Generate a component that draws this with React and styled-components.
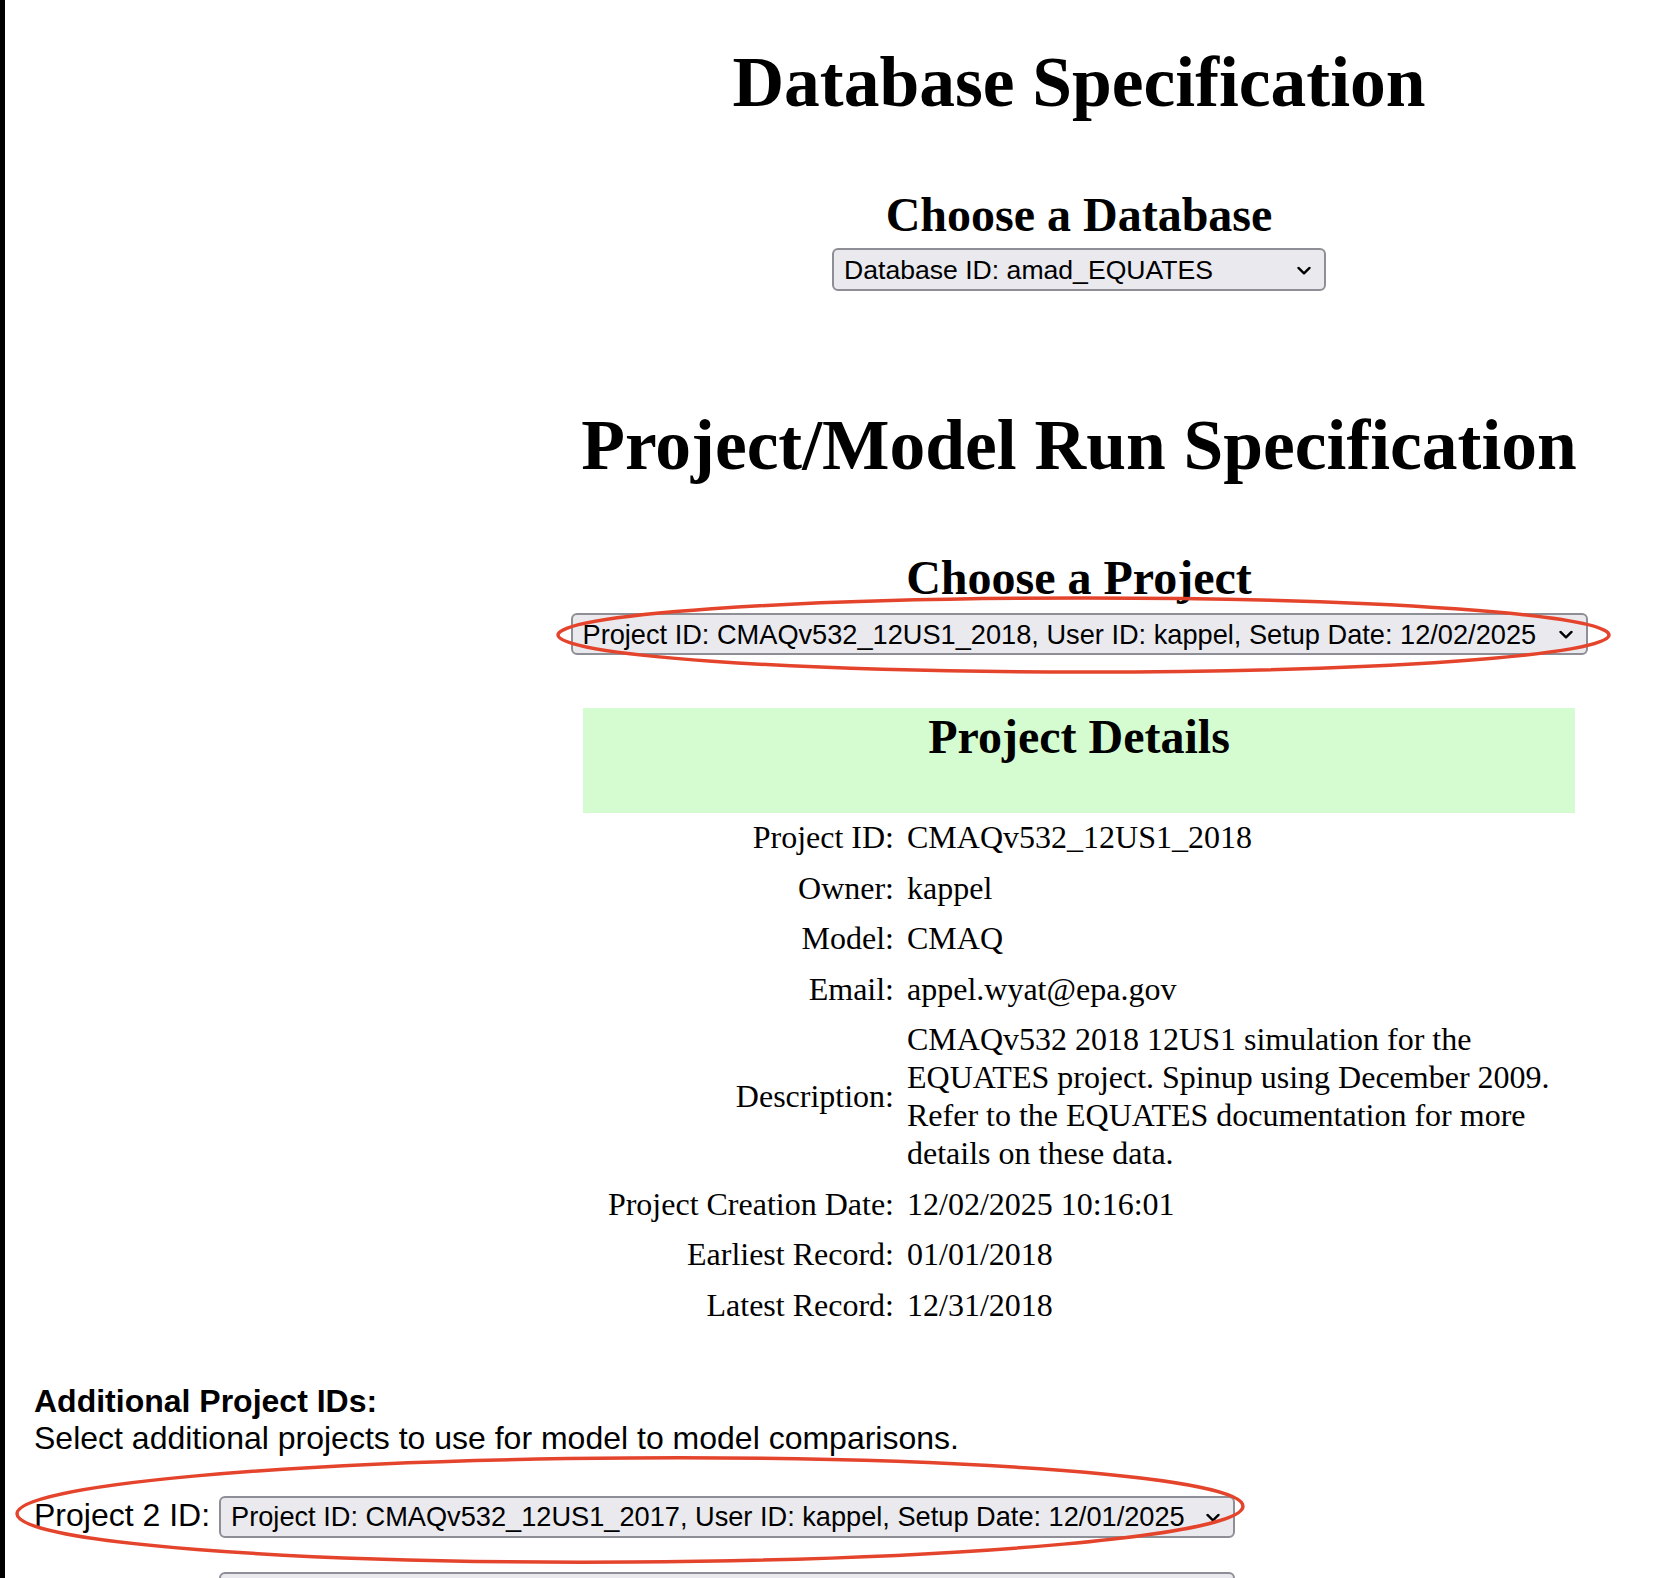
import styled, { createGlobalStyle } from "styled-components";

const GlobalStyle = createGlobalStyle`
    html, body {
        margin: 0;
        padding: 0;
        background: #fff;
        overflow: hidden;
    }
    body {
        font-family: "Liberation Serif", "Times New Roman", serif;
        color: #000;
    }
`;

const Page = styled.div`
    position: relative;
    height: 1578px;
    box-sizing: border-box;
    border-left: 5px solid #000;
    overflow: hidden;
`;

const Layout = styled.div`
    display: grid;
    grid-template-columns: 495px 1fr;
`;

const Sidebar = styled.aside``;

const Main = styled.main`
    display: flex;
    flex-direction: column;
    align-items: center;
    padding-top: 41px;
    text-align: center;
`;

const Title = styled.h1`
    margin: 0 0 64px;
    font-size: 71.5px;
    line-height: 82px;
    font-weight: bold;
`;

const Subtitle = styled.h2`
    margin: 0 0 ${({ $gap }) => $gap ?? 0}px;
    font-size: 48px;
    line-height: 55px;
    font-weight: bold;
`;

const SelectWrap = styled.div`
    position: relative;
    display: inline-block;
    margin-bottom: ${({ $gap }) => $gap ?? 0}px;
`;

const Select = styled.select`
    appearance: none;
    -webkit-appearance: none;
    display: block;
    width: ${({ $width }) => $width}px;
    height: ${({ $height }) => $height ?? 42}px;
    box-sizing: border-box;
    margin: 0;
    padding: 0 40px 0 10px;
    border: 2px solid #8e8e96;
    border-radius: 6px;
    background: #e9e9ee;
    color: #000;
    font-family: "Liberation Sans", Arial, sans-serif;
    font-size: ${({ $size }) => $size ?? 27.2}px;
    outline: none;
`;

const Chevron = styled.svg`
    position: absolute;
    right: 15px;
    top: 50%;
    transform: translateY(-40%);
    pointer-events: none;
`;

const Ring = styled.svg`
    position: absolute;
    left: ${({ $left }) => $left}px;
    top: ${({ $top }) => $top}px;
    overflow: visible;
    pointer-events: none;
    transform: rotate(${({ $tilt }) => $tilt ?? 0}deg);
`;

const DetailsBanner = styled.div`
    width: 992px;
    height: 105px;
    box-sizing: border-box;
    padding-top: 1px;
    background: #d5fcd0;
`;

const DetailsGrid = styled.dl`
    width: 992px;
    margin: 0;
    display: grid;
    grid-template-columns: 311px 1fr;
    column-gap: 13px;
    font-size: 32px;
    line-height: 38px;
    text-align: left;
`;

const Term = styled.dt`
    align-self: center;
    padding: 5px 0 7.5px;
    text-align: right;
`;

const Value = styled.dd`
    margin: 0;
    padding: 5px 0 7.5px;
`;

const Additional = styled.section`
    padding: 52px 0 0 29px;
    font-family: "Liberation Sans", Arial, sans-serif;
    font-size: 32px;
    line-height: 36.8px;
`;

const AdditionalTitle = styled.div`
    font-weight: bold;
`;

const ProjectRows = styled.div`
    display: flex;
    flex-direction: column;
    gap: 34px;
    margin-top: 39px;
`;

const ProjectRow = styled.div`
    position: relative;
    display: flex;
    align-items: baseline;
    gap: 9px;
`;

const RowLabel = styled.span`
    min-width: 176px;
`;

const ChevronIcon = () => (
    <Chevron width="14" height="9" viewBox="0 0 14 9">
        <polyline
            points="1.5,1.5 7,7 12.5,1.5"
            fill="none"
            stroke="#000"
            strokeWidth="2.3"
            strokeLinecap="round"
            strokeLinejoin="round"
        />
    </Chevron>
);

const Highlight = ({ left, top, width, height, tilt }) => (
    <Ring
        $left={left}
        $top={top}
        $tilt={tilt}
        width={width}
        height={height}
        viewBox={`0 0 ${width} ${height}`}
    >
        <ellipse
            cx={width / 2}
            cy={height / 2}
            rx={width / 2 - 2}
            ry={height / 2 - 2}
            fill="none"
            stroke="#e5442c"
            strokeWidth="3.5"
        />
    </Ring>
);

const Dropdown = ({ width, height, size, gap, value, children }) => (
    <SelectWrap $gap={gap}>
        <Select $width={width} $height={height} $size={size} defaultValue={value}>
            <option value={value}>{value}</option>
        </Select>
        <ChevronIcon />
        {children}
    </SelectWrap>
);

const DetailRow = ({ term, value }) => (
    <>
        <Term>{term}</Term>
        <Value>{value}</Value>
    </>
);

const details = [
    ["Project ID:", "CMAQv532_12US1_2018"],
    ["Owner:", "kappel"],
    ["Model:", "CMAQ"],
    ["Email:", "appel.wyat@epa.gov"],
    [
        "Description:",
        "CMAQv532 2018 12US1 simulation for the EQUATES project. Spinup using December 2009. Refer to the EQUATES documentation for more details on these data.",
    ],
    ["Project Creation Date:", "12/02/2025 10:16:01"],
    ["Earliest Record:", "01/01/2018"],
    ["Latest Record:", "12/31/2018"],
];

const extraProjects = [
    {
        id: "p2",
        label: "Project 2 ID:",
        value: "Project ID: CMAQv532_12US1_2017, User ID: kappel, Setup Date: 12/01/2025",
        highlighted: true,
    },
    {
        id: "p3",
        label: "",
        value: "",
    },
];

const App = () => (
    <>
        <GlobalStyle />
        <Page>
            <Layout>
                <Sidebar />
                <Main>
                    <Title>Database Specification</Title>
                    <Subtitle $gap={6}>Choose a Database</Subtitle>
                    <Dropdown
                        width={494}
                        height={43}
                        size={26.6}
                        gap={113}
                        value="Database ID: amad_EQUATES"
                    />

                    <Title>Project/Model Run Specification</Title>
                    <Subtitle $gap={8}>Choose a Project</Subtitle>
                    <Dropdown
                        width={1017}
                        gap={53}
                        value="Project ID: CMAQv532_12US1_2018, User ID: kappel, Setup Date: 12/02/2025"
                    >
                        <Highlight left={-15} top={-17} width={1055} height={78} />
                    </Dropdown>

                    <DetailsBanner>
                        <Subtitle>Project Details</Subtitle>
                    </DetailsBanner>
                    <DetailsGrid>
                        {details.map(([term, value]) => (
                            <DetailRow key={term} term={term} value={value} />
                        ))}
                    </DetailsGrid>
                </Main>
            </Layout>

            <Additional>
                <AdditionalTitle>Additional Project IDs:</AdditionalTitle>
                <div>Select additional projects to use for model to model comparisons.</div>
                <ProjectRows>
                    {extraProjects.map((p) => (
                        <ProjectRow key={p.id}>
                            <RowLabel>{p.label}</RowLabel>
                            <Dropdown width={1016} value={p.value} />
                            {p.highlighted && (
                                <Highlight
                                    left={-19}
                                    top={-40}
                                    width={1230}
                                    height={108}
                                    tilt={-0.35}
                                />
                            )}
                        </ProjectRow>
                    ))}
                </ProjectRows>
            </Additional>
        </Page>
    </>
);

export default App;
